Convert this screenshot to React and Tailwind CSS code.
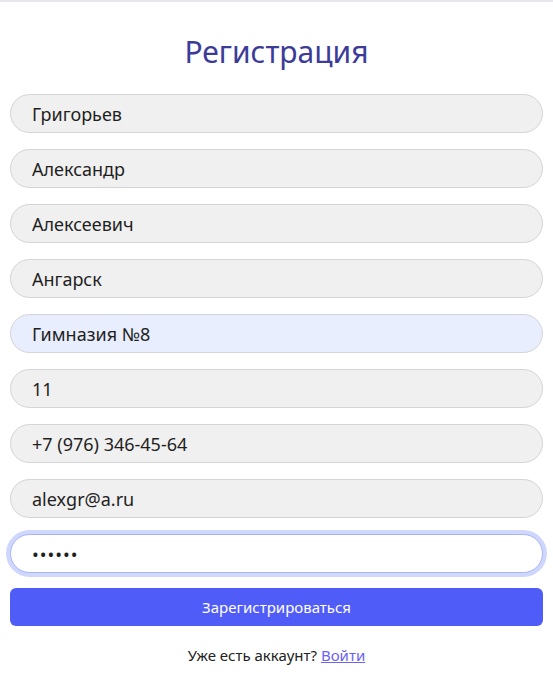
import React, { useState } from "react";

const fields = [
  { name: "surname", value: "Григорьев" },
  { name: "name", value: "Александр" },
  { name: "patronymic", value: "Алексеевич" },
  { name: "city", value: "Ангарск" },
  { name: "school", value: "Гимназия №8", autofill: true },
  { name: "grade", value: "11" },
  { name: "phone", value: "+7 (976) 346-45-64" },
  { name: "email", value: "alexgr@a.ru" },
];

export default function App() {
  const [form, setForm] = useState(
    Object.fromEntries(fields.map((f) => [f.name, f.value]))
  );
  const [password, setPassword] = useState("123456");

  return (
    <div
      className="min-h-screen bg-white border-t-2 border-[#e5e7eb] px-[10px]"
      style={{ fontFamily: '"Noto Sans", "Open Sans", sans-serif' }}
    >
      <h1 className="mt-[32px] mb-[24px] text-center text-[30px] leading-[36px] text-[#3c3c98]">
        Регистрация
      </h1>

      <form className="flex flex-col gap-[16px]" onSubmit={(e) => e.preventDefault()}>
        {fields.map((f) => (
          <input
            key={f.name}
            type="text"
            value={form[f.name]}
            onChange={(e) => setForm({ ...form, [f.name]: e.target.value })}
            className={`h-[39px] w-full rounded-full border border-[#d4d4d8] px-[21px] text-[18px] text-[#1f1f1f] outline-none ${
              f.autofill ? "bg-[#e8eefd]" : "bg-[#f0f0f0]"
            }`}
          />
        ))}
        <input
          type="password"
          value={password}
          onChange={(e) => setPassword(e.target.value)}
          className="h-[39px] w-full rounded-full border border-[#a5b4fc] bg-white px-[21px] text-[18px] tracking-[1px] text-[#1f1f1f] outline-none ring-4 ring-[#d0d7fd]"
        />
        <button
          type="submit"
          className="mt-[-1px] h-[38px] w-full rounded-[6px] bg-[#505cf7] text-[15px] text-white"
        >
          Зарегистрироваться
        </button>
      </form>

      <p className="mt-[18px] text-center text-[15px] text-[#222]">
        Уже есть аккаунт?{" "}
        <a href="#" className="text-[#6b63f5] underline">
          Войти
        </a>
      </p>
    </div>
  );
}
